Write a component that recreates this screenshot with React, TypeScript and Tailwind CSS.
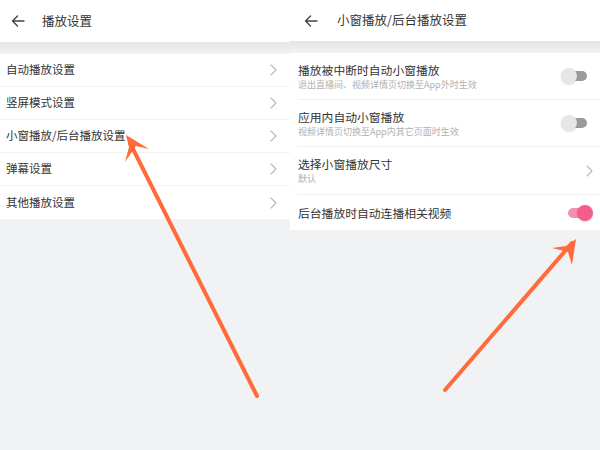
import React from "react";

const font = { fontFamily: '"Noto Sans CJK SC", "Noto Sans", sans-serif' };

function BackArrow() {
  return (
    <svg width="14" height="12" viewBox="0 0 14 12" fill="none" stroke="#444" strokeWidth="1.4" strokeLinecap="round" strokeLinejoin="round">
      <path d="M13 6H1.5M6.5 1L1.5 6l5 5" />
    </svg>
  );
}

function Chevron() {
  return (
    <svg width="7" height="12" viewBox="0 0 7 12" fill="none" stroke="#b8b8b8" strokeWidth="1.1" strokeLinecap="round" strokeLinejoin="round">
      <path d="M1 1l5 5-5 5" />
    </svg>
  );
}

function Toggle({ on }: { on: boolean }) {
  return (
    <div className="relative h-[18px] w-[32px] shrink-0">
      {on ? (
        <>
          <div className="absolute left-[7px] top-[4px] h-[10px] w-[18px] rounded-l-full bg-[#f390ad]" />
          <div className="absolute right-0 top-[1px] h-[16px] w-[16px] rounded-full bg-[#f45c8c] shadow-[0_1px_2px_rgba(0,0,0,0.15)]" />
        </>
      ) : (
        <>
          <div className="absolute left-[8px] top-[4px] h-[10px] w-[18px] rounded-r-full bg-[#9a9a9a]" />
          <div className="absolute left-0 top-[1px] h-[16px] w-[16px] rounded-full bg-[#e6e6e6] shadow-[0_1px_2px_rgba(0,0,0,0.12)]" />
        </>
      )}
    </div>
  );
}

function Header({ title, arrowPad, titlePad, height }: { title: string; arrowPad: string; titlePad: string; height: string }) {
  return (
    <>
      <div className={`flex ${height} items-center bg-white`}>
        <div className={arrowPad}>
          <BackArrow />
        </div>
        <div className={`${titlePad} text-[12.5px] text-[#333]`}>{title}</div>
      </div>
      <div className="h-[12px] bg-gradient-to-b from-[#e4e4e6] to-[#f1f2f4]" />
    </>
  );
}

const leftItems = ["自动播放设置", "竖屏模式设置", "小窗播放/后台播放设置", "弹幕设置", "其他播放设置"];

export default function App() {
  return (
    <div className="relative flex h-[450px] w-[600px] overflow-hidden bg-[#f1f2f4]" style={font}>
      {/* playback settings list */}
      <div className="w-[290px] shrink-0">
        <Header title="播放设置" arrowPad="pl-[11px]" titlePad="pl-[17px]" height="h-[42px]" />
        <div className="bg-white">
          {leftItems.map((t, i) => (
            <div
              key={t}
              className={`flex h-[33px] items-center justify-between pl-[6px] pr-[13px] ${i < leftItems.length - 1 ? "border-b border-[#f2f2f2]" : ""}`}
            >
              <span className="text-[11.5px] text-[#333]">{t}</span>
              <Chevron />
            </div>
          ))}
        </div>
      </div>

      {/* mini-window / background playback settings */}
      <div className="flex-1">
        <Header title="小窗播放/后台播放设置" arrowPad="pl-[14px]" titlePad="pl-[19px]" height="h-[41px]" />
        <div className="bg-white pl-[8px]">
          <div className="flex h-[47px] items-center justify-between border-b border-[#f0f0f0] pr-[7px]">
            <div className="flex flex-col">
              <span className="text-[11.8px] leading-[16px] text-[#333]">播放被中断时自动小窗播放</span>
              <span className="text-[9px] leading-[13px] text-[#b0b0b0]">退出直播间、视频详情页切换至App外时生效</span>
            </div>
            <Toggle on={false} />
          </div>
          <div className="flex h-[47px] items-center justify-between border-b border-[#f0f0f0] pr-[7px]">
            <div className="flex flex-col">
              <span className="text-[11.8px] leading-[16px] text-[#333]">应用内自动小窗播放</span>
              <span className="text-[9px] leading-[13px] text-[#b0b0b0]">视频详情页切换至App内其它页面时生效</span>
            </div>
            <Toggle on={false} />
          </div>
          <div className="flex h-[48px] items-center justify-between border-b border-[#f0f0f0] pr-[7px]">
            <div className="flex flex-col">
              <span className="text-[11.8px] leading-[16px] text-[#333]">选择小窗播放尺寸</span>
              <span className="text-[9px] leading-[13px] text-[#b0b0b0]">默认</span>
            </div>
            <Chevron />
          </div>
          <div className="flex h-[35px] items-center justify-between pr-[7px]">
            <span className="text-[11.8px] text-[#333]">后台播放时自动连播相关视频</span>
            <Toggle on={true} />
          </div>
        </div>
      </div>

      {/* annotation arrows */}
      <svg className="pointer-events-none absolute inset-0" width="600" height="450" viewBox="0 0 600 450">
        <g stroke="#ff6b3a" strokeWidth="4" strokeLinecap="round" fill="none">
          <line x1="257" y1="396" x2="130" y2="143" />
          <line x1="445" y1="390" x2="572" y2="243" />
        </g>
        <g fill="#ff6b3a">
          <polygon points="126,135 149,149 136,146 125,162 129,147" />
          <polygon points="576,239 572,265 568,252 552,248 566,246" />
        </g>
      </svg>
    </div>
  );
}
